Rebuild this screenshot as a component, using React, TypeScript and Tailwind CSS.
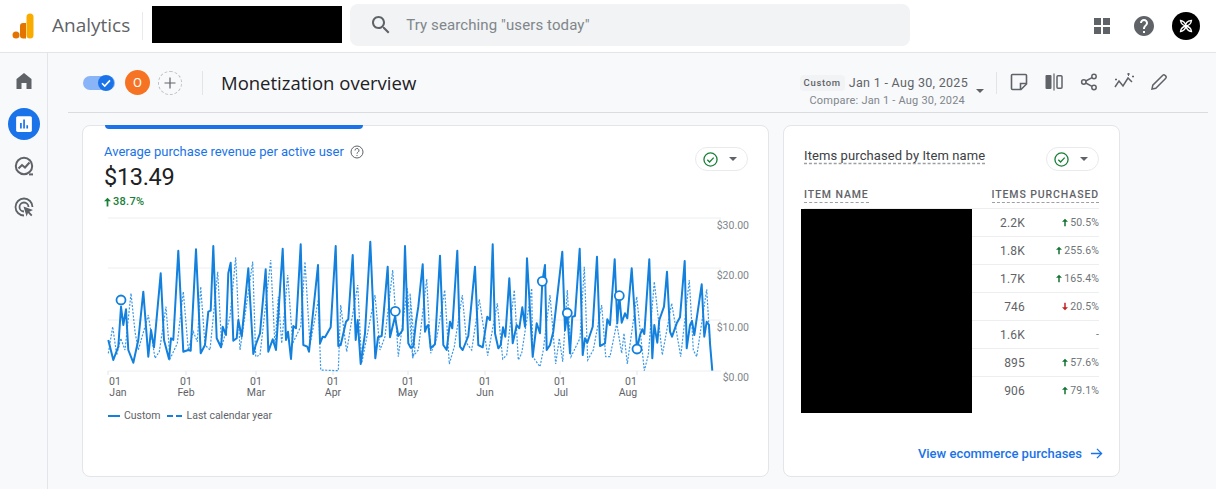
// chart points are read off the reference, in page pixels
type Pt = [number, number];
const fromLeft = (p: Pt[]) => p.map(([x, y]) => `${(90 + x / 3).toFixed(1)},${(210 + y / 3).toFixed(1)}`);
const fromRight = (p: Pt[]) => p.map(([x, y]) => `${(410 + x / 3).toFixed(1)},${(210 + y / 3).toFixed(1)}`);

const SOLID_A: Pt[] = [[55,390],[70,450],[85,410],[93,290],[100,345],[108,298],[115,420],[130,458],[145,390],[160,245],[175,440],[183,360],[192,412],[212,190],[222,390],[237,447],[243,385],[250,390],[265,122],[280,425],[295,420],[302,422],[318,118],[332,430],[345,405],[355,305],[362,302],[370,108],[380,385],[393,412],[398,350],[408,375],[415,190],[422,158],[430,392],[440,385],[445,330],[455,380],[475,175],[490,432],[497,405],[510,370],[527,178],[535,425],[548,388],[558,420],[578,116],[588,390],[594,365],[603,447],[610,348],[618,355],[632,103],[640,405],[652,410],[657,425],[684,165],[690,400],[698,380],[705,382],[722,352],[737,108],[745,408],[752,405],[768,335],[775,328],[788,135],[797,390],[803,330],[812,462],[825,370],[841,95],[856,445],[864,382],[875,378],[893,170],[900,382],[915,320],[925,378],[938,360],[945,108],[955,400],[962,413],[970,410],[978,335]];
const SOLID_B: Pt[] = [[25,290],[38,163],[45,365],[50,350],[55,345],[62,415],[75,403],[90,137],[100,405],[110,420],[120,335],[127,355],[142,122],[150,410],[158,420],[175,378],[195,170],[205,405],[218,412],[232,320],[240,330],[248,103],[255,370],[265,415],[272,405],[279,352],[286,380],[298,205],[308,400],[320,345],[328,355],[337,292],[345,350],[351,145],[368,440],[380,340],[390,370],[397,215],[405,165],[410,420],[420,405],[430,365],[457,125],[465,360],[472,310],[480,430],[487,320],[495,318],[509,116],[518,435],[525,385],[532,398],[548,350],[561,140],[570,408],[585,400],[592,328],[600,345],[614,148],[622,340],[628,257],[635,338],[645,310],[652,325],[665,175],[681,417],[690,375],[697,358],[703,372],[718,148],[727,445],[733,345],[742,398],[748,330],[762,290],[771,185],[780,365],[786,380],[800,340],[810,322],[824,153],[830,415],[840,345],[846,333],[853,375],[875,223],[883,380],[890,335],[897,345],[900,400],[907,482]];
const DASH_A: Pt[] = [[55,430],[68,350],[80,435],[92,385],[105,420],[123,250],[135,365],[145,420],[175,315],[195,445],[208,425],[228,290],[240,447],[262,400],[280,245],[295,420],[310,365],[322,395],[332,230],[345,405],[360,420],[383,185],[395,410],[420,320],[437,142],[450,420],[488,155],[497,440],[510,435],[542,150],[555,410],[565,260],[575,400],[593,195],[608,400],[632,350],[645,155],[660,405],[685,270],[692,480],[745,482],[752,285],[770,425],[785,330],[803,225],[815,460],[855,255],[870,420],[885,380],[908,180],[925,440],[952,235],[968,445],[975,420]];
const DASH_B: Pt[] = [[0,250],[8,440],[25,420],[50,207],[62,430],[80,385],[104,240],[118,462],[133,410],[157,255],[170,400],[185,420],[208,268],[233,437],[262,280],[278,447],[290,435],[313,240],[325,450],[335,430],[345,365],[365,235],[368,440],[390,470],[400,420],[420,255],[437,462],[448,385],[458,455],[472,240],[483,440],[510,385],[523,170],[533,450],[550,420],[575,285],[587,440],[600,440],[620,340],[635,430],[642,370],[652,462],[680,260],[703,482],[715,435],[733,215],[757,435],[785,280],[812,440],[838,210],[850,420],[860,440],[890,238],[900,400]];

const solidLine = [...fromLeft(SOLID_A), ...fromRight(SOLID_B)].join(' ');
const dashLine = [...fromLeft(DASH_A), ...fromRight(DASH_B)].join(' ');

const MARKERS: Pt[] = [[121,300],[395.3,311.3],[542.3,281.3],[567.3,313],[619.3,295.7],[637,349]];
const GRID_Y = [218, 268, 320, 371];
const Y_LABELS: [string, number][] = [['$30.00', 229], ['$20.00', 279], ['$10.00', 331], ['$0.00', 381]];
// month, label x, "01" x, tick x
const X_LABELS: [string, number, number, number][] = [['Jan', 118, 115, 108], ['Feb', 186, 186, 186], ['Mar', 256, 256, 256], ['Apr', 333, 333, 333], ['May', 408, 408, 408], ['Jun', 485, 485, 485], ['Jul', 561, 560, 560], ['Aug', 628, 631, 637]];

const ROWS = [
  { value: '2.2K', change: '50.5%', dir: 'up' },
  { value: '1.8K', change: '255.6%', dir: 'up' },
  { value: '1.7K', change: '165.4%', dir: 'up' },
  { value: '746', change: '20.5%', dir: 'down' },
  { value: '1.6K', change: '-', dir: '' },
  { value: '895', change: '57.6%', dir: 'up' },
  { value: '906', change: '79.1%', dir: 'up' },
];

function Arrow({ down, className }: { down?: boolean; className: string }) {
  return (
    <svg viewBox="0 0 8 10" className={className} fill="currentColor">
      {down ? <path d="M3 0h2v6h3L4 10 0 6h3z" /> : <path d="M3 10h2V4h3L4 0 0 4h3z" />}
    </svg>
  );
}

function CheckChip() {
  return (
    <div className="flex h-6 w-[53px] items-center rounded-full border border-[#e8eaed] bg-white pl-[7px]">
      <svg viewBox="0 0 16 16" className="h-[15px] w-[15px] text-[#188038]" fill="none" stroke="currentColor" strokeWidth="1.4">
        <circle cx="8" cy="8" r="7" />
        <path d="M4.6 8.2l2.4 2.4 4.4-4.6" />
      </svg>
      <svg viewBox="0 0 8 4" className="ml-[11px] h-1 w-2 text-[#5f6368]" fill="currentColor">
        <path d="M0 0h8L4 4z" />
      </svg>
    </div>
  );
}

function Sidebar() {
  return (
    <aside className="flex w-[48px] shrink-0 flex-col items-center border-r border-[#e3e5e8] pt-[16px]">
      <svg viewBox="0 0 24 24" className="h-6 w-6 text-[#5f6368]" fill="currentColor">
        <path d="M12 4L4.500 10v10h5v-6h5v6h5V10z" />
      </svg>
      <div className="mt-[15px] flex h-8 w-8 items-center justify-center rounded-full bg-[#1a73e8]">
        <svg viewBox="0 0 16 16" className="h-[18px] w-[18px]">
          <rect x="1" y="1" width="14" height="14" rx="1.500" fill="#fff" />
          <path d="M4.500 7v5h1.500V7zM7.300 4v8h1.500V4zM10.100 9v3h1.500V9z" fill="#1a73e8" />
        </svg>
      </div>
      <svg viewBox="0 0 24 24" className="mt-[14px] h-6 w-6 text-[#5f6368]" fill="none" stroke="currentColor" strokeWidth="2">
        <circle cx="12" cy="12" r="8.200" />
        <path d="M6.500 14.500l3.500-3.500 3 2.500 4.500-5" />
        <path d="M17 20.400h4" />
      </svg>
      <svg viewBox="0 0 24 24" className="mt-[17px] h-6 w-6 text-[#5f6368]" fill="none" stroke="currentColor" strokeWidth="1.800">
        <path d="M12 20.500a8.500 8.500 0 1 1 8.500-8.500" />
        <path d="M12 16.500a4.500 4.500 0 1 1 4.500-4.500" />
        <path d="M11.500 11.500l9.500 3.600-3.600 1.600 3 3.200-1.300 1.300-3.100-3.200-1.400 3.500z" fill="currentColor" stroke="none" />
      </svg>
    </aside>
  );
}

export default function App() {
  return (
    <div className="flex h-[489px] w-[1216px] flex-col overflow-hidden bg-[#f8f9fb] font-['Roboto',sans-serif] text-[#5f6368]">
      <header className="flex h-[53px] shrink-0 items-center border-b border-[#e3e5e8] bg-white">
        <svg viewBox="0 0 24 26" className="ml-[12px] h-[26px] w-[24px]">
          <rect x="14.500" y="0.500" width="7" height="25" rx="3.500" fill="#f9ab00" />
          <path d="M8 13a3 3 0 0 1 3-3h3v15.500h-3a3 3 0 0 1-3-3z" fill="#e37400" />
          <circle cx="4" cy="22" r="3.500" fill="#e37400" />
        </svg>
        <span className="-mt-[2px] ml-[16px] font-['Open_Sans',sans-serif] text-[19px] text-[#5f6368]">Analytics</span>
        <div className="ml-[12px] h-[28px] w-px bg-[#e8eaed]" />
        <div className="-mt-[4px] ml-[9px] h-[37px] w-[190px] bg-black" />
        <div className="-mt-[2px] ml-[8px] flex h-[42px] w-[560px] items-center rounded-lg bg-[#f1f3f4] pl-[19px]">
          <svg viewBox="0 0 24 24" className="h-6 w-6 text-[#5f6368]" fill="currentColor">
            <path d="M15.500 14h-.79l-.28-.27C15.410 12.590 16 11.110 16 9.500 16 5.910 13.090 3 9.500 3S3 5.910 3 9.500 5.910 16 9.500 16c1.610 0 3.090-.59 4.230-1.570l.27.28v.79l5 4.990L20.490 19l-4.990-5zm-6 0C7.010 14 5 11.990 5 9.500S7.010 5 9.500 5 14 7.010 14 9.500 11.990 14 9.500 14z" />
          </svg>
          <span className="ml-[13px] text-[15px] tracking-[0.1px] text-[#80868b]">Try searching "users today"</span>
        </div>
        <svg viewBox="0 0 16 16" className="ml-[184px] h-4 w-4 text-[#5f6368]" fill="currentColor">
          <path d="M0 0h7v7H0zM9 0h7v7H9zM0 9h7v7H0zM9 9h7v7H9z" />
        </svg>
        <svg viewBox="0 0 24 24" className="ml-[22px] h-[24px] w-[24px] text-[#5f6368]" fill="currentColor">
          <path d="M12 2C6.480 2 2 6.480 2 12s4.480 10 10 10 10-4.480 10-10S17.520 2 12 2zm1 17h-2v-2h2v2zm2.070-7.750l-.9.920C13.450 12.900 13 13.500 13 15h-2v-.5c0-1.100.45-2.100 1.170-2.830l1.240-1.260c.37-.36.59-.86.59-1.410 0-1.100-.9-2-2-2s-2 .9-2 2H8c0-2.210 1.790-4 4-4s4 1.790 4 4c0 .88-.36 1.680-.93 2.250z" />
        </svg>
        <div className="ml-[16px] flex h-7 w-7 items-center justify-center rounded-full bg-black">
          <svg viewBox="0 0 16 16" className="h-4 w-4" fill="none" stroke="#fff" strokeWidth="1.300">
            <path d="M2.500 2.500c3 .5 5 3 5.500 5.500-.5-2.500.5-5 5.500-5.500-.5 4-3 5-5.500 5.500 2.500.5 5 1.500 5.500 5.500-4-.5-5-3-5.500-5.500-.5 2.500-2.500 5-5.500 5.500.5-4 3-5 5.500-5.500-2.500-.5-5-2-5.500-5.500z" />
          </svg>
        </div>
      </header>

      <div className="flex min-h-0 flex-1">
        <Sidebar />
        <main className="min-w-0 flex-1">
          <div className="ml-[20px] flex h-[60px] w-[1140px] items-center border-b border-[#dadce0] pl-[15px] pr-[40px]">
            <div className="relative h-[14px] w-[32px] rounded-full bg-[#8ab4f8]">
              <div className="absolute -top-[1px] left-[15px] flex h-4 w-4 items-center justify-center rounded-full bg-[#1a73e8]">
                <svg viewBox="0 0 12 12" className="h-3 w-3" fill="none" stroke="#fff" strokeWidth="1.600">
                  <path d="M2 6.300l2.700 2.700 5.300-5.600" />
                </svg>
              </div>
            </div>
            <div className="ml-[10px] flex h-[25px] w-[25px] items-center justify-center rounded-full bg-[#f57322]">
              <span className="text-[13px] leading-none text-white">O</span>
            </div>
            <div className="ml-[8px] flex h-6 w-6 items-center justify-center rounded-full border border-dashed border-[#bdc1c6] text-[#5f6368]">
              <svg viewBox="0 0 12 12" className="h-3 w-3" fill="none" stroke="currentColor" strokeWidth="1.200">
                <path d="M6 0.500v11M0.500 6h11" />
              </svg>
            </div>
            <div className="ml-[20px] h-[24px] w-px bg-[#e3e5e8]" />
            <h1 className="ml-[18px] font-['Open_Sans',sans-serif] text-[18.500px] text-[#202124]">Monetization overview</h1>

            <div className="ml-[auto] flex items-center">
              <div className="mt-[18px] flex flex-col items-end">
                <div className="flex items-center">
                  <span className="rounded-sm bg-[#f1f3f4] px-[4px] py-[1px] text-[9.500px] font-medium tracking-[0.7px] text-[#5f6368]">Custom</span>
                  <span className="ml-[4px] text-[12.500px] tracking-[0.3px] text-[#5f6368]">Jan 1 - Aug 30, 2025</span>
                </div>
                <span className="mr-[3px] text-[11px] tracking-[0.2px] text-[#80868b]">Compare: Jan 1 - Aug 30, 2024</span>
              </div>
              <svg viewBox="0 0 8 4" className="ml-[8px] mt-[16px] h-1 w-2 text-[#5f6368]" fill="currentColor">
                <path d="M0 0h8L4 4z" />
              </svg>
              <div className="ml-[12px] h-[22px] w-px bg-[#e3e5e8]" />
              <svg viewBox="0 0 18 18" className="ml-[13px] -mt-[2px] h-[18px] w-[18px] text-[#5f6368]" fill="none" stroke="currentColor" strokeWidth="1.600">
                <path d="M2.500 1.500h13a1 1 0 0 1 1 1V11l-5.500 5.500H2.500a1 1 0 0 1-1-1v-13a1 1 0 0 1 1-1z" />
                <path d="M16 10.500h-5.500V16" />
              </svg>
              <svg viewBox="0 0 18 18" className="ml-[17px] -mt-[2px] h-[18px] w-[18px] text-[#5f6368]">
                <rect x="0.500" y="2" width="6" height="14" rx="1" fill="currentColor" />
                <path d="M9 0.500v17" stroke="currentColor" strokeWidth="1.200" />
                <rect x="12" y="2.800" width="5" height="12.400" rx="1" fill="none" stroke="currentColor" strokeWidth="1.500" />
              </svg>
              <svg viewBox="0 0 18 18" className="ml-[17px] -mt-[2px] h-[18px] w-[18px] text-[#5f6368]" fill="none" stroke="currentColor" strokeWidth="1.500">
                <circle cx="14" cy="3.500" r="2.200" />
                <circle cx="3.800" cy="9" r="2.200" />
                <circle cx="14" cy="14.500" r="2.200" />
                <path d="M5.800 8l6.200-3.400M5.800 10l6.200 3.400" />
              </svg>
              <svg viewBox="0 0 20 18" className="ml-[16px] -mt-[2px] h-[18px] w-[20px] text-[#5f6368]" fill="none" stroke="currentColor" strokeWidth="1.500">
                <path d="M1 14l4-6 4 5 5-8 4 4" />
                <path d="M1 6.500h2M2 5.500v2M13 1h3M14.500 0v3M18 3.500h2M19 2.500v2" strokeWidth="1" />
              </svg>
              <svg viewBox="0 0 18 18" className="ml-[16px] -mt-[2px] h-[18px] w-[18px] text-[#5f6368]" fill="none" stroke="currentColor" strokeWidth="1.500">
                <path d="M2 16l.8-3.800L12.800 2.200a1.500 1.500 0 0 1 2.100 0l.9.9a1.500 1.500 0 0 1 0 2.100L5.800 15.200z" />
              </svg>
            </div>
          </div>

          <div className="ml-[35px] mt-[12px] flex gap-[14px]">
            <section className="relative h-[352px] w-[687px] -ml-px rounded-lg border border-[#e3e5e8] bg-white">
              <div className="absolute -top-px left-[22px] h-[4px] w-[258px] rounded-b-sm bg-[#1a73e8]" />
              <div className="flex items-start justify-between pl-[21px] pr-[20px] pt-[18px]">
                <div>
                  <div className="flex items-center">
                    <span className="text-[13px] leading-[16px] text-[#1a73e8]">Average purchase revenue per active user</span>
                    <svg viewBox="0 0 14 14" className="ml-[6px] h-[14px] w-[14px] text-[#5f6368]" fill="none" stroke="currentColor" strokeWidth="1">
                      <circle cx="7" cy="7" r="6" />
                      <path d="M5 5.500a2 2 0 1 1 3 1.700c-.7.400-1 .8-1 1.500M7 10v1" />
                    </svg>
                  </div>
                  <div className="mt-[2px] text-[23.500px] tracking-[-0.3px] leading-[30px] text-[#202124]">$13.49</div>
                  <div className="mt-[3px] flex items-center text-[11px] font-medium tracking-[0.3px] leading-[14px] text-[#188038]">
                    <Arrow className="mr-[2px] h-[10px] w-[7px]" />
                    38.7%
                  </div>
                </div>
                <div className="mt-[3px]">
                  <CheckChip />
                </div>
              </div>

              <svg viewBox="90 210 670 190" className="mt-[1px] ml-[7px] block h-[190px] w-[670px]">
                {GRID_Y.map((y) => (
                  <line key={y} x1="108" x2="721" y1={y} y2={y} stroke="#eceef0" strokeWidth="1" />
                ))}
                {X_LABELS.map(([m, x, dayX, tickX]) => (
                  <g key={m}>
                    <line x1={tickX} x2={tickX} y1="371" y2="375" stroke="#e3e5e8" />
                    <text x={dayX} y="385" textAnchor="middle" fontSize="10.500" fill="#5f6368">01</text>
                    <text x={x} y="396" textAnchor="middle" fontSize="10.500" fill="#5f6368">{m}</text>
                  </g>
                ))}
                {Y_LABELS.map(([t, y]) => (
                  <text key={t} x="749" y={y} textAnchor="end" fontSize="10.500" fill="#80868b">{t}</text>
                ))}
                <polyline points={dashLine} fill="none" stroke="#3b98e6" strokeWidth="1.200" strokeDasharray="2 1.500" />
                <polyline points={solidLine} fill="none" stroke="#1280dc" strokeWidth="2" strokeLinejoin="round" />
                {MARKERS.map(([x, y]) => (
                  <circle key={x} cx={x} cy={y} r="4.500" fill="#fff" stroke="#1280dc" strokeWidth="1.800" />
                ))}
              </svg>

              <div className="ml-[25px] mt-[8px] flex items-center text-[10.500px] text-[#5f6368]">
                <div className="h-[2px] w-[12px] bg-[#1280dc]" />
                <span className="ml-[4px]">Custom</span>
                <div className="ml-[6px] flex gap-[3px]">
                  <div className="h-[2px] w-[6px] bg-[#1280dc]" />
                  <div className="h-[2px] w-[6px] bg-[#1280dc]" />
                </div>
                <span className="ml-[5px]">Last calendar year</span>
              </div>
            </section>

            <section className="relative flex h-[352px] w-[337px] flex-col rounded-lg border border-[#e3e5e8] bg-white px-[20px]">
              <div className="mt-[22px] flex items-start justify-between">
                <span className="text-[13px] tracking-[0.1px] leading-[16px] text-[#3c4043] [text-decoration-line:underline] [text-decoration-style:dashed] [text-decoration-color:#9aa0a6] underline-offset-[3px]">Items purchased by Item name</span>
                <div className="-mt-[1px]">
                  <CheckChip />
                </div>
              </div>
              <div className="mt-[17px] flex h-[18px] items-start justify-between text-[10.500px] font-medium tracking-[0.9px] text-[#5f6368]">
                <span className="border-b border-dashed border-[#9aa0a6] leading-[14px]">ITEM NAME</span>
                <span className="border-b border-dashed border-[#9aa0a6] leading-[14px]">ITEMS PURCHASED</span>
              </div>
              <div className="mt-[2px]">
                {ROWS.map((r) => (
                  <div key={r.value} className="flex h-[28px] items-center justify-end border-t border-[#eceef0] text-[#5f6368]">
                    <span className="text-[12px] tracking-[0.2px]">{r.value}</span>
                    <div className="flex w-[74px] items-center justify-end text-[10.500px] tracking-[0.1px] text-[#70757a]">
                      {r.dir === 'up' && <Arrow className="mr-[2px] h-[9px] w-[6px] text-[#137333]" />}
                      {r.dir === 'down' && <Arrow down className="mr-[2px] h-[9px] w-[6px] text-[#c5221f]" />}
                      {r.change}
                    </div>
                  </div>
                ))}
              </div>
              <div className="absolute left-[17px] top-[83px] h-[204px] w-[171px] bg-black" />
              <div className="-mr-[4px] mb-[13px] mt-auto flex items-center justify-end">
                <span className="text-[13px] font-medium text-[#1a73e8]">View ecommerce purchases</span>
                <svg viewBox="0 0 14 14" className="ml-[8px] h-[13px] w-[13px] text-[#1a73e8]" fill="none" stroke="currentColor" strokeWidth="1.400">
                  <path d="M1 7h11.500M7.500 2l5 5-5 5" />
                </svg>
              </div>
            </section>
          </div>
        </main>
      </div>
    </div>
  );
}
